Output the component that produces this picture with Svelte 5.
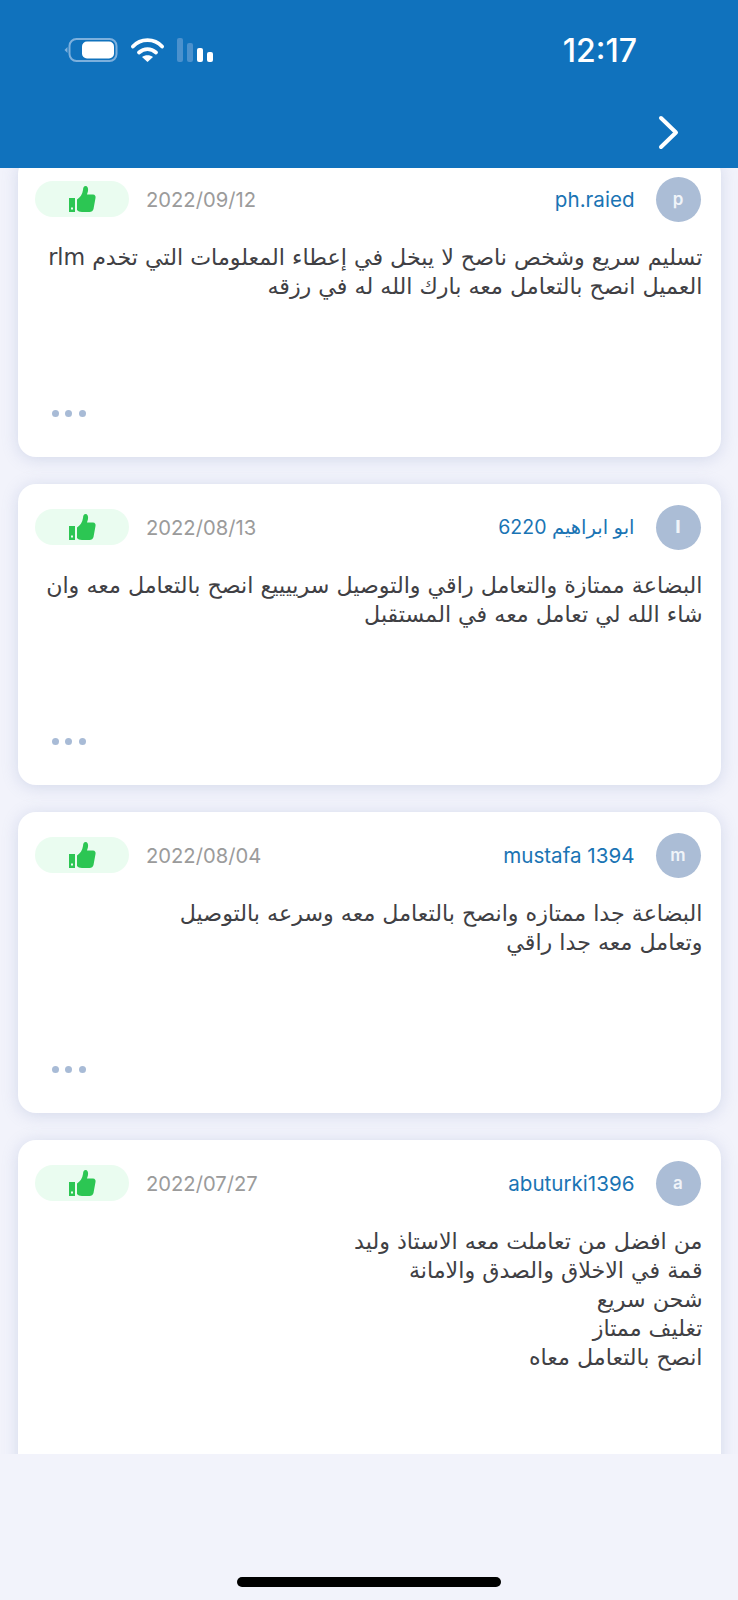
<script>
	const reviews = [
		{
			initial: 'p',
			name: 'ph.raied',
			date: '2022/09/12',
			lines: ['تسليم سريع وشخص ناصح لا يبخل في إعطاء المعلومات التي تخدم rlm', 'العميل انصح بالتعامل معه بارك الله له في رزقه']
		},
		{
			initial: 'ا',
			name: 'ابو ابراهيم 6220',
			arabic: true,
			date: '2022/08/13',
			lines: ['البضاعة ممتازة والتعامل راقي والتوصيل سرييييع انصح بالتعامل معه وان', 'شاء الله لي تعامل معه في المستقبل']
		},
		{
			initial: 'm',
			name: 'mustafa 1394',
			date: '2022/08/04',
			lines: ['البضاعة جدا ممتازه وانصح بالتعامل معه وسرعه بالتوصيل', 'وتعامل معه جدا راقي']
		},
		{
			initial: 'a',
			name: 'abuturki1396',
			date: '2022/07/27',
			lines: ['من افضل من تعاملت معه الاستاذ وليد', 'قمة في الاخلاق والصدق والامانة', 'شحن سريع', 'تغليف ممتاز', 'انصح بالتعامل معاه']
		}
	];
</script>

<div class="screen">
	<header class="header">
		<div class="status">
			<div class="status-icons">
				<svg class="battery" width="54" height="26" viewBox="0 0 54 26">
					<path d="M0.500 12 L3.500 9 V15 Z" fill="#7db0dd" />
					<rect x="5.500" y="1" width="47" height="22" rx="7" fill="none" stroke="#7db0dd" stroke-width="2" />
					<rect x="18" y="3.500" width="32" height="17" rx="5" fill="#fff" />
				</svg>
				<svg class="wifi" width="36" height="26" viewBox="0 0 36 26">
					<path d="M3.900 8.500 C11.500 0 25.500 0 33.100 8.500" fill="none" stroke="#fff" stroke-width="3.800" stroke-linecap="round" />
					<path d="M10 14.500 C15 10 22 10 27 14.500" fill="none" stroke="#fff" stroke-width="3.800" stroke-linecap="round" />
					<path d="M13 19 C16 16.800 21 16.800 24 19 L18.500 24 Z" fill="#fff" />
				</svg>
				<div class="signal">
					<span class="bar dim tall"></span>
					<span class="bar dim mid"></span>
					<span class="bar low"></span>
					<span class="bar lower"></span>
				</div>
			</div>
			<div class="time">12:17</div>
		</div>
		<div class="nav">
			<svg width="22" height="36" viewBox="0 0 22 36">
				<path d="M3 3 L18 17.500 L3 32" fill="none" stroke="#fff" stroke-width="4" stroke-linecap="round" stroke-linejoin="round" />
			</svg>
		</div>
	</header>

	<main class="list">
		<div class="cards">
			{#each reviews as review}
				<article class="card">
					<div class="top">
						<div class="pill">
							<svg width="28" height="28" viewBox="0 0 28 28">
								<path d="M1 13 H7 V27 H1 Z M3 22.500 v2 h2 v-2 Z" fill="#2cc653" fill-rule="evenodd" />
								<path d="M9 14.500 C12 12.500 14.500 9.500 15 5 C15.200 2 16 1 17.500 1 C19.500 1 20.500 3 20 6 C19.700 7.500 19.200 8.500 19 9.500 H25 C27 9.500 28 11.500 27.500 13 L25.500 24 C25 26 23.500 27 21.500 27 H14 C11.500 27 10 26 9 25 Z" fill="#2cc653" />
							</svg>
						</div>
						<span class="date">{review.date}</span>
						<span class="name" class:arabic={review.arabic}>{review.name}</span>
						<span class="avatar">{review.initial}</span>
					</div>
					<div class="body" dir="rtl">
						{#each review.lines as line}
							<p>{line}</p>
						{/each}
					</div>
					<div class="more">
						<span></span>
						<span></span>
						<span></span>
					</div>
				</article>
			{/each}
		</div>
	</main>

	<footer class="footer">
		<div class="home"></div>
	</footer>
</div>

<style>
	:global(body) {
		margin: 0;
		background: #f2f3fb;
	}

	.screen {
		width: 738px;
		height: 1600px;
		display: flex;
		flex-direction: column;
		overflow: hidden;
		font-family: Inter, 'DejaVu Sans', sans-serif;
		background: #f2f3fb;
	}

	.header {
		height: 168px;
		flex: none;
		background: #1072bd;
		position: relative;
		z-index: 2;
		padding: 0 58px 0 64px;
		box-sizing: border-box;
	}

	.status {
		display: flex;
		justify-content: space-between;
		align-items: center;
		padding-top: 34px;
		height: 34px;
	}

	.status-icons {
		display: flex;
		align-items: center;
		gap: 11px;
	}

	.signal {
		display: flex;
		align-items: flex-end;
		gap: 4px;
		height: 24px;
		margin-left: 1px;
		margin-bottom: 2px;
	}

	.bar {
		width: 6px;
		background: #fff;
		border-radius: 2px;
	}

	.bar.dim {
		background: #4b91cd;
	}

	.tall {
		height: 24px;
	}

	.mid {
		height: 19px;
	}

	.low {
		height: 14px;
	}

	.lower {
		height: 10px;
	}

	.time {
		color: #fff;
		font-size: 32px;
		font-weight: 500;
		line-height: 34px;
		margin-right: 43px;
	}

	.nav {
		display: flex;
		justify-content: flex-end;
		margin-top: 47px;
	}

	.list {
		height: 1286px;
		flex: none;
		overflow: hidden;
	}

	.cards {
		display: flex;
		flex-direction: column;
		gap: 27px;
		margin-top: -12px;
		padding: 0 17.500px;
	}

	.card {
		flex: none;
		background: #fff;
		border-radius: 18px;
		box-shadow: 0 2px 16px rgba(140, 155, 200, 0.3);
		padding: 21px 20px 40px 17.500px;
		box-sizing: border-box;
		display: flex;
		flex-direction: column;
	}

	.top {
		display: flex;
		align-items: center;
		height: 44px;
	}

	.pill {
		width: 94px;
		height: 36px;
		background: #eafcf0;
		border-radius: 18px;
		display: flex;
		align-items: center;
		justify-content: center;
	}

	.date {
		margin-left: 17px;
		font-size: 20.200px;
		color: #9b9b9b;
	}

	.name {
		margin-left: auto;
		font-size: 20.600px;
		color: #1a74b4;
	}

	.name.arabic {
		font-size: 19.500px;
	}

	.avatar {
		width: 45px;
		height: 45px;
		margin-left: 21px;
		border-radius: 50%;
		background: #abbdd6;
		color: #f0f4f9;
		font-size: 17px;
		font-weight: 600;
		display: flex;
		align-items: center;
		justify-content: center;
	}

	.body {
		margin: 22px -2px 0 0;
		padding: 0 0 109px 15px;
		font-family: 'DejaVu Sans', sans-serif;
		font-size: 22.200px;
		line-height: 29px;
		color: #404044;
	}

	.body p {
		margin: 0;
		white-space: nowrap;
	}

	.more {
		display: flex;
		gap: 6.500px;
		padding-left: 16.500px;
	}

	.more span {
		width: 7px;
		height: 7px;
		border-radius: 50%;
		background: #a8bbd6;
	}

	.footer {
		flex: 1;
		position: relative;
		display: flex;
		justify-content: center;
		background: #f2f3fb;
		z-index: 2;
	}

	.home {
		width: 264px;
		height: 10px;
		margin-top: 123px;
		background: #000;
		border-radius: 5px;
	}
</style>
